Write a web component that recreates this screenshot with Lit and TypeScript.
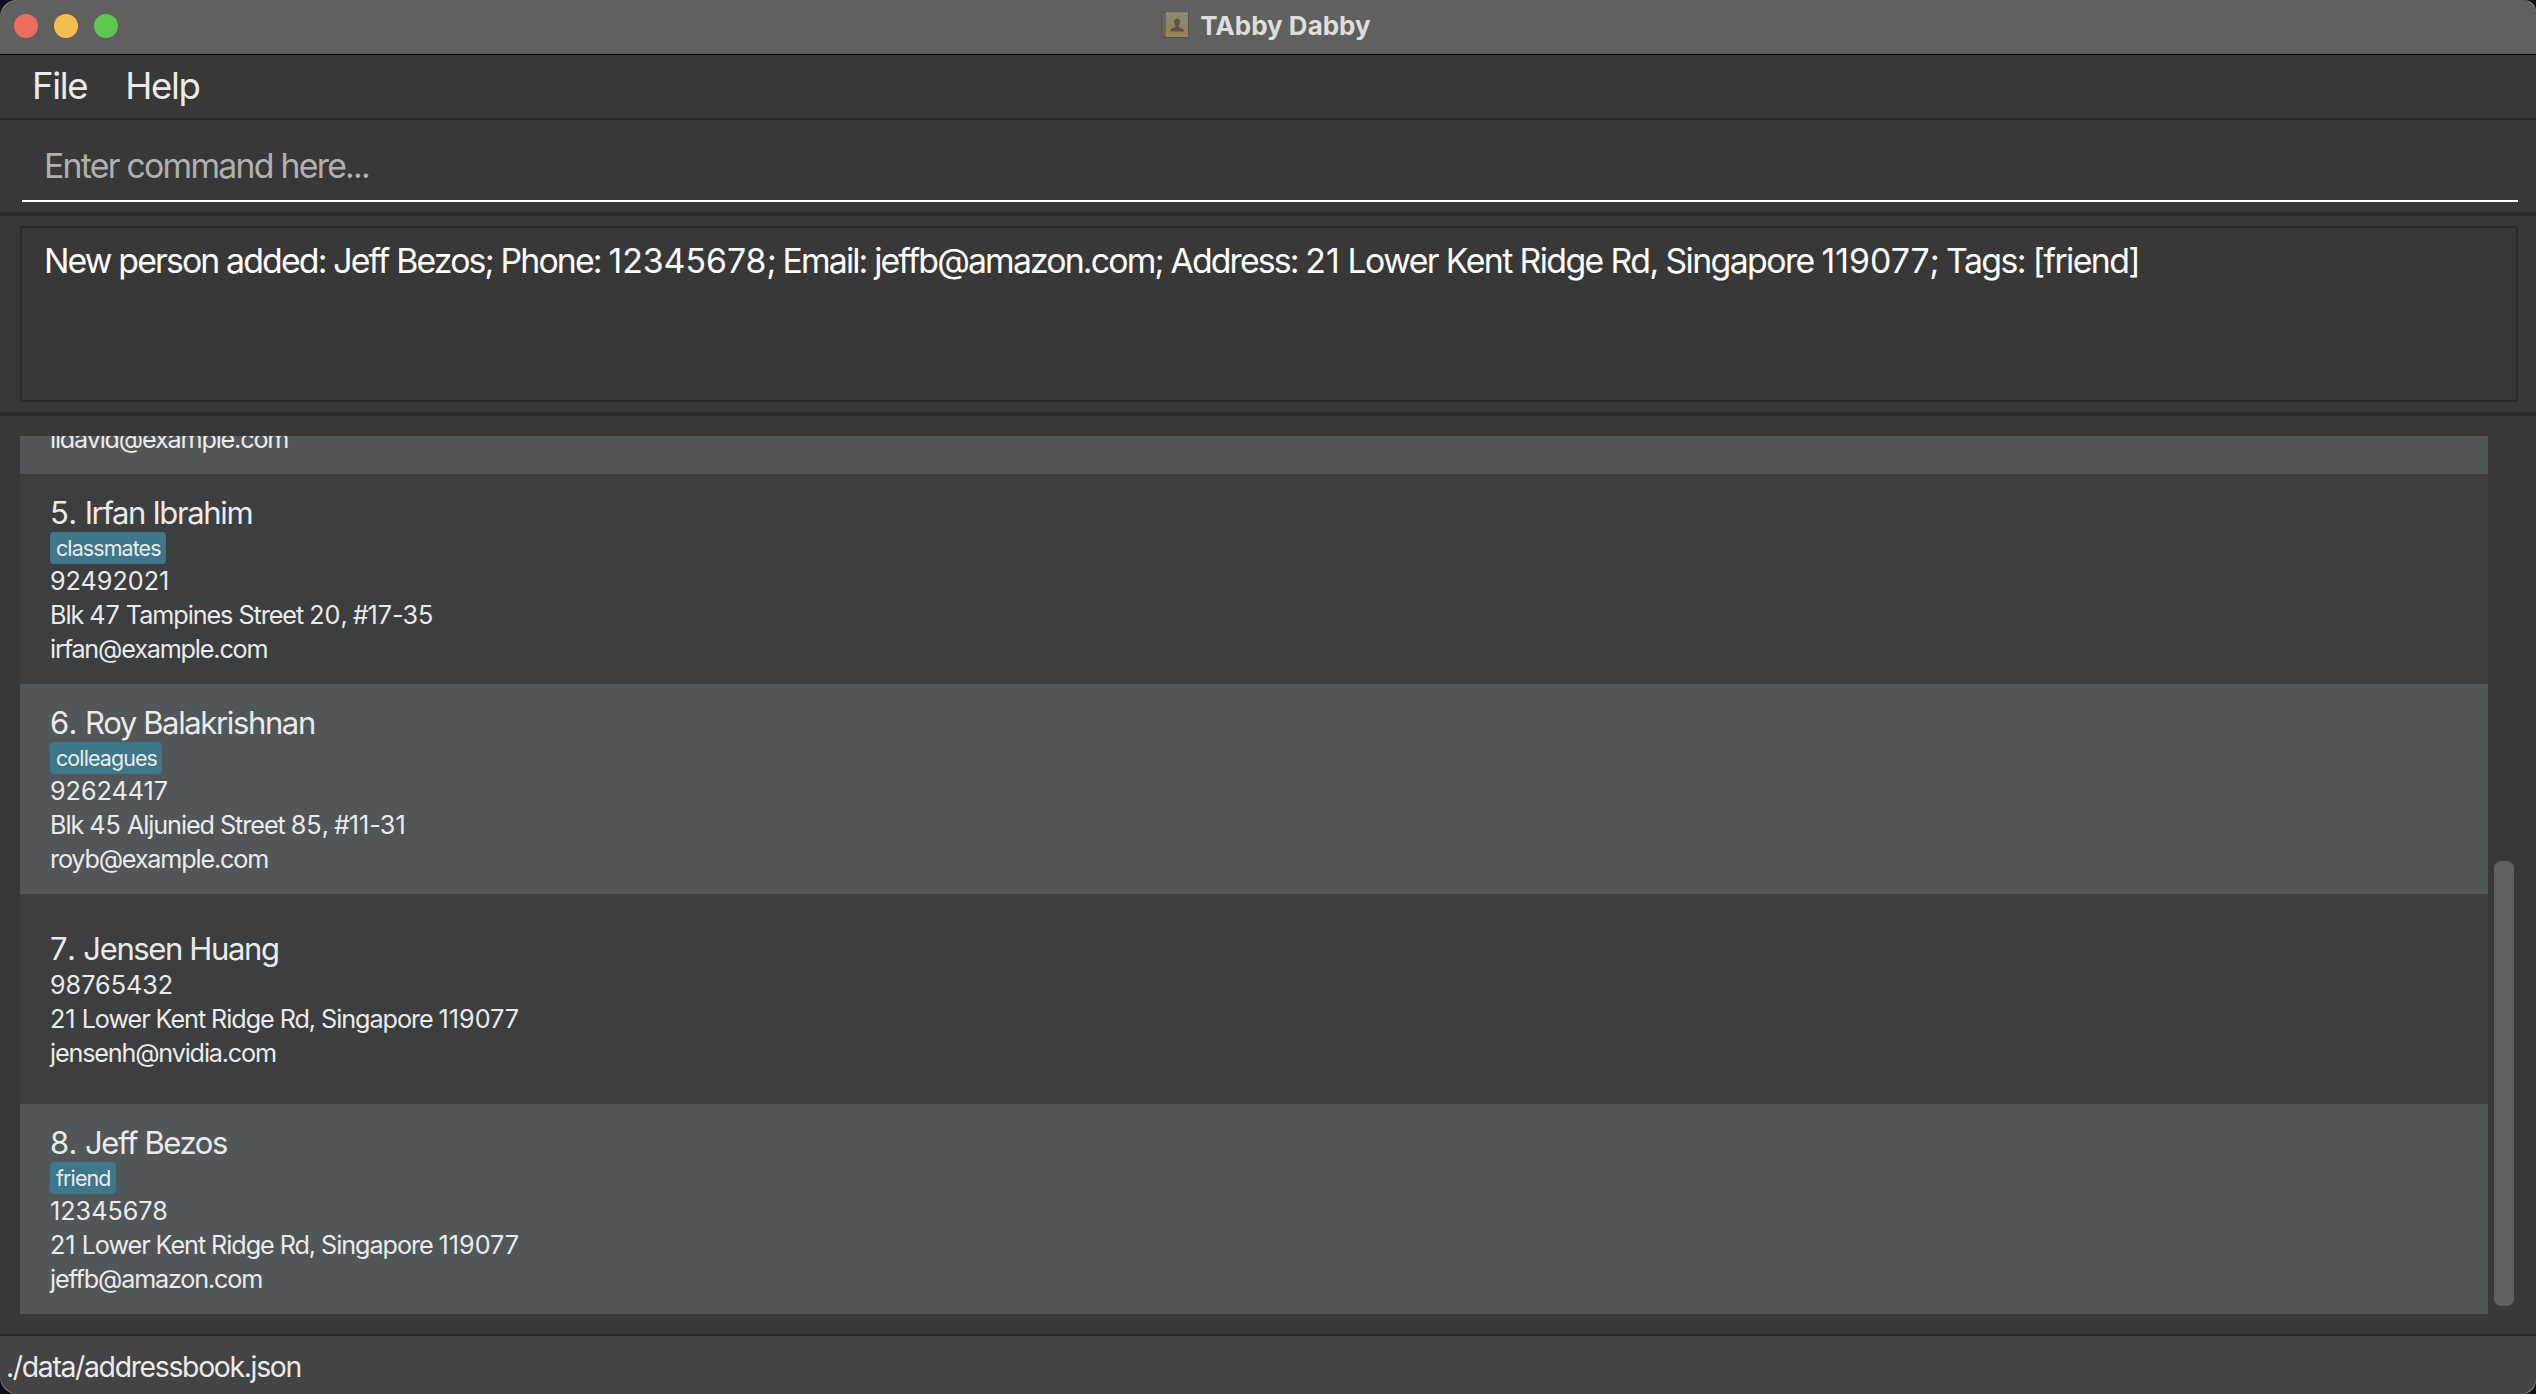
import { LitElement, html, css, nothing } from "lit";
import { customElement, property } from "lit/decorators.js";

interface Person {
  id: number;
  name: string;
  tags: string[];
  phone: string;
  address: string;
  email: string;
}

const PEOPLE: Person[] = [
  { id: 5, name: "Irfan Ibrahim", tags: ["classmates"], phone: "92492021", address: "Blk 47 Tampines Street 20, #17-35", email: "irfan@example.com" },
  { id: 6, name: "Roy Balakrishnan", tags: ["colleagues"], phone: "92624417", address: "Blk 45 Aljunied Street 85, #11-31", email: "royb@example.com" },
  { id: 7, name: "Jensen Huang", tags: [], phone: "98765432", address: "21 Lower Kent Ridge Rd, Singapore 119077", email: "jensenh@nvidia.com" },
  { id: 8, name: "Jeff Bezos", tags: ["friend"], phone: "12345678", address: "21 Lower Kent Ridge Rd, Singapore 119077", email: "jeffb@amazon.com" },
];

const MESSAGE_CONTACT = "New person added: Jeff Bezos; Phone: 12345678; Email: jeffb@amazon.com; Address: ";
const MESSAGE_PLACE = "21 Lower Kent Ridge Rd, Singapore 119077; Tags: [friend]";

/** Wraps runs of digits so that they keep their natural spacing in tightly tracked text. */
const spaced = (text: string) =>
  text.split(/(\d+)/).map((part) => (/^\d+$/.test(part) ? html`<span class="num">${part}</span>` : part));

@customElement("person-card")
export class PersonCard extends LitElement {
  @property({ attribute: false }) person!: Person;

  static styles = css`
    :host { display: flex; flex-direction: column; justify-content: center; box-sizing: border-box; height: 210px; flex: none; padding: 0 30px; }
    .num { letter-spacing: 0; }
    .name { font-size: 31px; line-height: 39px; padding-top: 1px; letter-spacing: -0.044em; }
    .index { letter-spacing: -0.02em; font-kerning: none; }
    .tags { display: flex; gap: 6px; height: 32px; }
    .tag { box-sizing: border-box; height: 32px; line-height: 33px; padding: 0 5px 0 6px; border-radius: 4px; background: #3e768a; font-size: 21.4px; letter-spacing: -0.0405em; }
    .line { font-size: 25.2px; line-height: 34px; }
    .address { letter-spacing: -0.042em; }
    .email { letter-spacing: -0.0465em; }
  `;

  render() {
    const p = this.person;
    return html`
      <div class="name"><span class="index">${p.id}. </span>${p.name}</div>
      ${p.tags.length ? html`<div class="tags">${p.tags.map((t) => html`<span class="tag">${t}</span>`)}</div>` : nothing}
      <div class="line">${p.phone}</div>
      <div class="line address">${spaced(p.address)}</div>
      <div class="line email">${p.email}</div>
    `;
  }
}

@customElement("app-root")
export class AppRoot extends LitElement {
  static styles = css`
    :host { display: block; width: 2536px; height: 1394px; background: #11101a; font-family: Inter, "Liberation Sans", sans-serif; color: #ebebeb; }
    .frame { height: 1394px; background: #8b8b8b; border-radius: 17px 12px 14px 17px; }
    .window { display: flex; flex-direction: column; height: 1394px; background: #383838; border-radius: 20px 15px 17px 20px; overflow: hidden; white-space: nowrap; }
    .num { letter-spacing: 0; }

    .titlebar { display: grid; grid-template-columns: 1fr auto 1fr; align-items: center; box-sizing: border-box; height: 55px; flex: none; background: #60605e; border-bottom: 1px solid #000; padding-bottom: 2px; }
    .lights { display: flex; gap: 16px; padding-left: 14px; }
    .light { width: 24px; height: 24px; border-radius: 50%; }
    .close { background: #ed6b5f; }
    .minimize { background: #f4be4f; }
    .zoom { background: #5fc553; }
    .title { display: flex; align-items: center; padding-right: 4px; font-size: 26px; font-weight: 700; line-height: 32px; color: #dededd; }
    .book { display: block; width: 28px; height: 28px; margin: 0 11px 2px 0; }
    .title-text { padding-bottom: 1px; }

    .menu { display: flex; gap: 38px; box-sizing: border-box; height: 65px; flex: none; padding: 8px 32px 0; border-bottom: 2px solid #2b2b2b; font-size: 36.5px; line-height: 46px; letter-spacing: -0.036em; }

    .command { box-sizing: border-box; height: 96px; flex: none; padding: 20px 18px 10px 22px; border-bottom: 4px solid #2b2b2b; }
    .field { box-sizing: border-box; height: 62px; padding-left: 22px; border-bottom: 2px solid #fff; font-size: 33.8px; line-height: 52px; letter-spacing: -0.0515em; color: #b0b0b0; }

    .result { box-sizing: border-box; height: 200px; flex: none; padding: 10px 18px 10px 20px; border-bottom: 4px solid #2b2b2b; }
    .message { box-sizing: border-box; height: 176px; border: 2px solid #2b2b2b; padding: 10px 22px; font-size: 33.8px; line-height: 46px; color: #fff; }
    .contact { letter-spacing: -0.0546em; white-space: pre; }
    .place { letter-spacing: -0.0468em; }

    .people { display: flex; gap: 6px; box-sizing: border-box; height: 918px; flex: none; padding: 20px 22px 20px 20px; }
    .list { display: flex; flex-direction: column; justify-content: flex-end; width: 2468px; height: 878px; overflow: hidden; }
    .odd { background: #3c3e3f; }
    .even { background: #515658; }
    .scrolled { display: flex; flex-direction: column; justify-content: flex-end; box-sizing: border-box; height: 38px; flex: none; overflow: hidden; padding: 0 30px 18px; font-size: 25.2px; line-height: 34px; letter-spacing: -0.0465em; }
    .track { display: flex; flex-direction: column; justify-content: flex-end; box-sizing: border-box; width: 20px; padding-bottom: 8px; }
    .thumb { height: 445px; border-radius: 7px; background: #606060; }

    .status { box-sizing: border-box; height: 60px; flex: none; border-top: 2px solid #2b2b2b; background: #444; padding: 8px 6px 0; font-size: 28.4px; line-height: 46px; letter-spacing: -0.047em; }
  `;

  render() {
    return html`
      <div class="frame"><div class="window">
        <header class="titlebar">
          <div class="lights">
            <span class="light close"></span><span class="light minimize"></span><span class="light zoom"></span>
          </div>
          <div class="title">
            <svg class="book" viewBox="0 0 28 28">
              <rect x="0.5" y="1" width="27.5" height="26" rx="1.5" fill="#555351" />
              <rect x="1.5" y="2" width="4" height="23" fill="#696461" />
              <rect x="5" y="2" width="22" height="24" fill="#93835f" />
              <rect x="5" y="2" width="22" height="12" fill="#8f866f" />
              <rect x="5" y="1.5" width="22" height="1" fill="#aaa18b" />
              <rect x="5" y="24.5" width="22" height="1" fill="#a08a5c" />
              <path d="M16 7.500c2 0 3 1.400 3 3.400 0 1.700-.7 2.700-1.300 3.500v1.600c1.800 1 5.300 1.300 5.300 4.500H9c0-3.200 3.500-3.500 5.300-4.500v-1.600c-.6-.8-1.300-1.800-1.300-3.500 0-2 1-3.400 3-3.400z" fill="#5b5447" />
            </svg>
            <span class="title-text">TAbby Dabby</span>
          </div>
          <span></span>
        </header>
        <nav class="menu"><span>File</span><span>Help</span></nav>
        <section class="command"><div class="field">Enter command here...</div></section>
        <section class="result"><div class="message"><span class="contact">${spaced(MESSAGE_CONTACT)}</span><span class="place">${spaced(MESSAGE_PLACE)}</span></div></section>
        <main class="people">
          <div class="list">
            <div class="scrolled even"><div>lidavid@example.com</div></div>
            ${PEOPLE.map((p) => html`<person-card class=${p.id % 2 ? "odd" : "even"} .person=${p}></person-card>`)}
          </div>
          <div class="track"><div class="thumb"></div></div>
        </main>
        <footer class="status">./data/addressbook.json</footer>
      </div></div>
    `;
  }
}
